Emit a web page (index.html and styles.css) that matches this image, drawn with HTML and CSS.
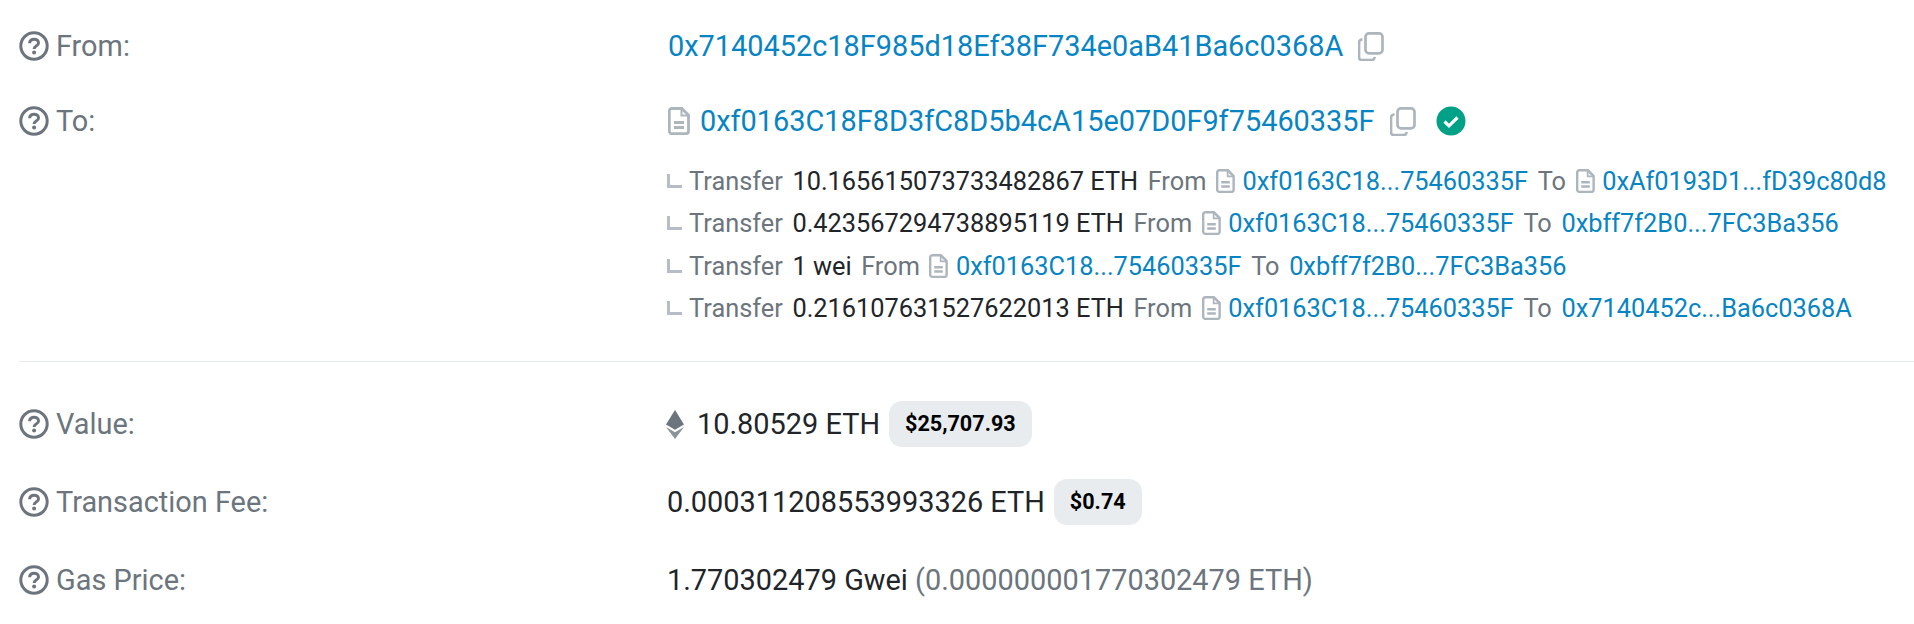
FILE: index.html
```html
<!DOCTYPE html>
<html lang="en">
<head>
<meta charset="UTF-8">
<title>Transaction Details</title>
<link rel="stylesheet" href="styles.css">
</head>
<body>
<svg class="defs" width="0" height="0">
  <symbol id="q" viewBox="0 0 30 30">
    <circle cx="15" cy="15" r="13.2" fill="none" stroke="currentColor" stroke-width="3"/>
    <path d="M10.6 12.2c0-2.500 2-4 4.500-4s4.400 1.500 4.400 3.700c0 3.300-4.400 3.100-4.400 6" fill="none" stroke="currentColor" stroke-width="3"/>
    <circle cx="15.100" cy="21.600" r="2" fill="currentColor"/>
  </symbol>
  <symbol id="doc" viewBox="0 0 22 28">
    <path d="M3.800 1.500h10l6.700 6.700v16a2.500 2.500 0 0 1-2.500 2.500H3.800a2.500 2.500 0 0 1-2.500-2.500V4a2.500 2.500 0 0 1 2.500-2.500z" fill="none" stroke="currentColor" stroke-width="2.800"/>
    <path d="M13.500 1.500v7h7" fill="none" stroke="currentColor" stroke-width="2"/>
    <path d="M6 15.500h10M6 20.500h10" stroke="currentColor" stroke-width="2.800"/>
  </symbol>
  <symbol id="copy" viewBox="0 0 26 29">
    <rect x="7.500" y="1.400" width="17" height="20" rx="3.500" fill="none" stroke="currentColor" stroke-width="2.700"/>
    <path d="M4.500 7.500h-.5a3 3 0 0 0-3 3v14.700a3 3 0 0 0 3 3h9.500a3 3 0 0 0 3-3v-.3" fill="none" stroke="currentColor" stroke-width="2.700"/>
  </symbol>
  <symbol id="arrow" viewBox="0 0 15 14">
    <path d="M1.500 0v12.500H15" fill="none" stroke="currentColor" stroke-width="3"/>
  </symbol>
</svg>

<div class="row row-from">
  <div class="label"><svg class="ico-q"><use href="#q"/></svg>From:</div>
  <div class="value value-addr">
    <a>0x7140452c18F985d18Ef38F734e0aB41Ba6c0368A</a>
    <svg class="ico-copy"><use href="#copy"/></svg>
  </div>
</div>

<div class="row row-to">
  <div class="label"><svg class="ico-q"><use href="#q"/></svg>To:</div>
  <div class="value value-addr">
    <svg class="ico-doc"><use href="#doc"/></svg>
    <a>0xf0163C18F8D3fC8D5b4cA15e07D0F9f75460335F</a>
    <svg class="ico-copy"><use href="#copy"/></svg>
    <svg class="ico-check" viewBox="0 0 30 30">
      <circle cx="15" cy="15" r="14.500" fill="#00a186"/>
      <path d="M8.500 15.500l4.500 4.300 8.500-8.300" fill="none" stroke="#fff" stroke-width="3.200"/>
    </svg>
  </div>
</div>

<ul class="transfers">
  <li>
    <svg class="ico-arrow"><use href="#arrow"/></svg>
    <span class="muted">Transfer</span>
    <span>10.165615073733482867 ETH</span>
    <span class="muted">From</span>
    <span class="addr"><svg class="ico-doc-sm"><use href="#doc"/></svg><a>0xf0163C18...75460335F</a></span>
    <span class="muted">To</span>
    <span class="addr"><svg class="ico-doc-sm"><use href="#doc"/></svg><a>0xAf0193D1...fD39c80d8</a></span>
  </li>
  <li>
    <svg class="ico-arrow"><use href="#arrow"/></svg>
    <span class="muted">Transfer</span>
    <span>0.423567294738895119 ETH</span>
    <span class="muted">From</span>
    <span class="addr"><svg class="ico-doc-sm"><use href="#doc"/></svg><a>0xf0163C18...75460335F</a></span>
    <span class="muted">To</span>
    <a>0xbff7f2B0...7FC3Ba356</a>
  </li>
  <li>
    <svg class="ico-arrow"><use href="#arrow"/></svg>
    <span class="muted">Transfer</span>
    <span>1 wei</span>
    <span class="muted">From</span>
    <span class="addr"><svg class="ico-doc-sm"><use href="#doc"/></svg><a>0xf0163C18...75460335F</a></span>
    <span class="muted">To</span>
    <a>0xbff7f2B0...7FC3Ba356</a>
  </li>
  <li>
    <svg class="ico-arrow"><use href="#arrow"/></svg>
    <span class="muted">Transfer</span>
    <span>0.216107631527622013 ETH</span>
    <span class="muted">From</span>
    <span class="addr"><svg class="ico-doc-sm"><use href="#doc"/></svg><a>0xf0163C18...75460335F</a></span>
    <span class="muted">To</span>
    <a>0x7140452c...Ba6c0368A</a>
  </li>
</ul>

<hr class="rule">

<div class="row row-value">
  <div class="label"><svg class="ico-q"><use href="#q"/></svg>Value:</div>
  <div class="value">
    <svg class="ico-eth" viewBox="0 0 18 29">
      <path d="M9 0L0 14.500l9 5.300 9-5.300z" fill="#6c757e"/>
      <path d="M0 17l9 12 9-12-9 5.300z" fill="#8c949b"/>
    </svg>
    <span>10.80529 ETH</span>
    <span class="badge">$25,707.93</span>
  </div>
</div>

<div class="row row-fee">
  <div class="label"><svg class="ico-q"><use href="#q"/></svg>Transaction Fee:</div>
  <div class="value">
    <span>0.000311208553993326 ETH</span>
    <span class="badge">$0.74</span>
  </div>
</div>

<div class="row row-gas">
  <div class="label"><svg class="ico-q"><use href="#q"/></svg>Gas Price:</div>
  <div class="value">
    <span>1.770302479 Gwei <span class="muted">(0.000000001770302479 ETH)</span></span>
  </div>
</div>
</body>
</html>
```
FILE: styles.css
```css
* {
  box-sizing: border-box;
}

body {
  margin: 0;
  padding: 0 0 0 19px;
  background-color: #fff;
  color: #212529;
  font-family: Roboto, sans-serif;
  font-size: 28.900px;
  line-height: 40px;
  overflow: hidden;
}

.defs {
  display: block;
}

a {
  color: #0784c3;
}

.muted {
  color: #6c757e;
}

.row {
  display: flex;
  align-items: center;
  height: 40px;
}

.row-from {
  margin-top: 26px;
}

.row-to {
  margin-top: 35px;
}

.row-value {
  margin-top: 42px;
}

.row-fee,
.row-gas {
  margin-top: 38px;
}

.label {
  display: flex;
  align-items: center;
  width: 648px;
  color: #6c757e;
}

.value {
  display: flex;
  align-items: center;
}

.value-addr {
  padding-left: 1px;
}

.ico-q {
  width: 30px;
  height: 30px;
  margin-right: 7px;
  color: #6c757e;
}

.ico-doc {
  width: 22px;
  height: 28px;
  margin-right: 10px;
  color: #adb5bd;
}

.ico-copy {
  width: 26px;
  height: 29px;
  margin-left: 15px;
  color: #adb5bd;
}

.ico-check {
  width: 30px;
  height: 30px;
  margin-left: 20px;
}

.ico-eth {
  width: 18px;
  height: 29px;
  margin: 0 13px 0 -1px;
}

.transfers {
  list-style: none;
  margin: 19px 0 0 648px;
  padding: 0;
  font-size: 25.350px;
  line-height: 42.300px;
}

.transfers li {
  display: flex;
  align-items: center;
  gap: 9.600px;
  white-space: nowrap;
}

.addr {
  display: flex;
  align-items: center;
  gap: 7.500px;
}

.ico-arrow {
  width: 15px;
  height: 14px;
  margin-right: -2.500px;
  color: #b6bdc9;
}

.ico-doc-sm {
  width: 19px;
  height: 24px;
  color: #adb5bd;
}

.rule {
  height: 1px;
  margin: 32px 0 0;
  border: 0;
  background-color: #e9ecef;
}

.badge {
  margin-left: 9px;
  padding: 0 16px;
  border-radius: 13px;
  background-color: #e9ecef;
  color: #000;
  font-size: 21.600px;
  font-weight: 700;
  line-height: 46px;
}
```
